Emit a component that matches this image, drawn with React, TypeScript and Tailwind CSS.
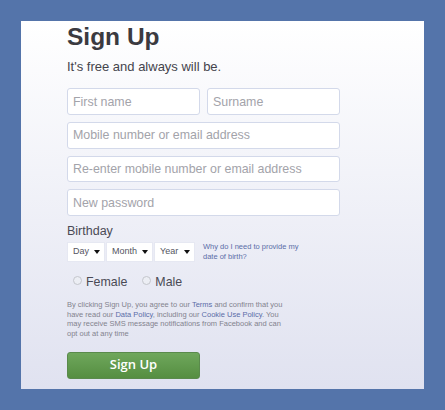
export default function App() {
  const inputClass =
    "w-full h-[26.6px] rounded-[3px] border border-[#d3d9ea] bg-white px-[5px] text-[12.4px] text-[#333] placeholder:text-[#a3a3aa] outline-none"

  return (
    <div className="w-[445px] h-[410px] bg-[#5474aa] pt-[21px] pl-[21px] font-['Liberation_Sans',sans-serif] overflow-hidden">
      <div className="w-[403px] h-[368px] bg-gradient-to-b from-white to-[#e0e2f0] pl-[46px] overflow-hidden">
        <h1 className="text-[24.5px] leading-[30px] font-bold text-[#3b3a40] mt-[1px]">Sign Up</h1>
        <p className="text-[13px] leading-[16px] text-[#44444c] mt-[7px]">It's free and always will be.</p>

        <form className="w-[273px] mt-[13.3px] flex flex-col gap-[7.07px]">
          <div className="flex gap-[7px]">
            <input className={inputClass} placeholder="First name" />
            <input className={inputClass} placeholder="Surname" />
          </div>
          <input className={inputClass} placeholder="Mobile number or email address" />
          <input className={inputClass} placeholder="Re-enter mobile number or email address" />
          <input className={inputClass} placeholder="New password" />
        </form>

        <div className="text-[12.5px] leading-[16px] text-[#4a4a55] mt-[7px]">Birthday</div>

        <div className="flex items-center mt-[3px]">
          <div className="flex gap-[1px]">
            {[
              { label: "Day", w: "w-[38px]" },
              { label: "Month", w: "w-[47px]" },
              { label: "Year", w: "w-[41px]" },
            ].map((s) => (
              <div
                key={s.label}
                className={`${s.w} h-[20px] bg-white border border-[#e6e8f2] flex items-center justify-between pl-[5px] pr-[4px] text-[9px] text-[#55555f]`}
              >
                <span>{s.label}</span>
                <span className="w-0 h-0 border-l-[3px] border-r-[3px] border-t-[4px] border-l-transparent border-r-transparent border-t-[#111]" />
              </div>
            ))}
          </div>
          <a className="ml-[8px] w-[105px] text-[7.5px] leading-[9.5px] text-[#5b6da8]">
            Why do I need to provide my date of birth?
          </a>
        </div>

        <div className="flex items-center mt-[12px] pl-[6px] text-[12.4px] leading-[16px] text-[#4a4a55]">
          <span className="w-[9px] h-[9px] rounded-full bg-[#eceef4] border border-[#c4c6cc] -mt-[3px]" />
          <span className="ml-[4px]">Female</span>
          <span className="ml-[15px] w-[9px] h-[9px] rounded-full bg-[#eceef4] border border-[#c4c6cc] -mt-[3px]" />
          <span className="ml-[4px]">Male</span>
        </div>

        <p className="w-[225px] mt-[10px] text-[7.5px] leading-[9.7px] text-[#83838e]">
          By clicking Sign Up, you agree to our <a className="text-[#5b6da8]">Terms</a> and confirm that you have read our{" "}
          <a className="text-[#5b6da8]">Data Policy</a>, including our <a className="text-[#5b6da8]">Cookie Use Policy</a>. You may receive SMS
          message notifications from Facebook and can opt out at any time
        </p>

        <button
          type="button"
          className="block w-[133px] h-[27px] mt-[13px] rounded-[3px] bg-gradient-to-b from-[#6fa75c] to-[#558e41] border border-[#5a8a4c] text-white text-[13px] font-semibold font-['Open_Sans',sans-serif]"
        >
          Sign Up
        </button>
      </div>
    </div>
  )
}
